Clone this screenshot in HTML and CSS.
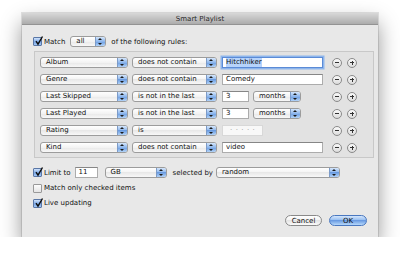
FILE: index.html
```html
<!DOCTYPE html>
<html lang="en">
  <head>
    <meta charset="UTF-8" />
    <meta name="viewport" content="width=device-width, initial-scale=1.0" />
    <title>Smart Playlist</title>
    <link rel="stylesheet" href="styles.css">
  </head>
  <body>
    <div class="sp-Window">
      <div class="sp-Titlebar">Smart Playlist</div>
      <div class="sp-Content">
        <div class="sp-Line">
          <span class="sp-Check sp-Check-on"><svg viewBox="0 0 9 9"><path d="M2 4.2 L4 7.2 L8.5 -0.5"/></svg></span>
          <span class="sp-Label">Match</span>
          <span class="sp-Popup sp-Popup-all"><span class="sp-Popup_Text">all</span><span class="sp-Popup_Arrow"></span></span>
          <span class="sp-Label sp-Label-after">of the following rules:</span>
        </div>

        <div class="sp-Rules">
          <div class="sp-Rule">
            <span class="sp-Popup sp-Popup-field"><span class="sp-Popup_Text">Album</span><span class="sp-Popup_Arrow"></span></span>
            <span class="sp-Popup sp-Popup-op"><span class="sp-Popup_Text">does not contain</span><span class="sp-Popup_Arrow"></span></span>
            <span class="sp-Value">
              <span class="sp-Input sp-Input-wide sp-Input-focus"><span class="sp-Input_Sel">Hitchhiker</span></span>
            </span>
            <span class="sp-Round sp-Round-minus"></span>
            <span class="sp-Round sp-Round-plus"></span>
          </div>
          <div class="sp-Rule">
            <span class="sp-Popup sp-Popup-field"><span class="sp-Popup_Text">Genre</span><span class="sp-Popup_Arrow"></span></span>
            <span class="sp-Popup sp-Popup-op"><span class="sp-Popup_Text">does not contain</span><span class="sp-Popup_Arrow"></span></span>
            <span class="sp-Value">
              <span class="sp-Input sp-Input-wide">Comedy</span>
            </span>
            <span class="sp-Round sp-Round-minus"></span>
            <span class="sp-Round sp-Round-plus"></span>
          </div>
          <div class="sp-Rule">
            <span class="sp-Popup sp-Popup-field"><span class="sp-Popup_Text">Last Skipped</span><span class="sp-Popup_Arrow"></span></span>
            <span class="sp-Popup sp-Popup-op"><span class="sp-Popup_Text">is not in the last</span><span class="sp-Popup_Arrow"></span></span>
            <span class="sp-Value">
              <span class="sp-Input sp-Input-num">3</span>
              <span class="sp-Popup sp-Popup-unit"><span class="sp-Popup_Text">months</span><span class="sp-Popup_Arrow"></span></span>
            </span>
            <span class="sp-Round sp-Round-minus"></span>
            <span class="sp-Round sp-Round-plus"></span>
          </div>
          <div class="sp-Rule">
            <span class="sp-Popup sp-Popup-field"><span class="sp-Popup_Text">Last Played</span><span class="sp-Popup_Arrow"></span></span>
            <span class="sp-Popup sp-Popup-op"><span class="sp-Popup_Text">is not in the last</span><span class="sp-Popup_Arrow"></span></span>
            <span class="sp-Value">
              <span class="sp-Input sp-Input-num">3</span>
              <span class="sp-Popup sp-Popup-unit"><span class="sp-Popup_Text">months</span><span class="sp-Popup_Arrow"></span></span>
            </span>
            <span class="sp-Round sp-Round-minus"></span>
            <span class="sp-Round sp-Round-plus"></span>
          </div>
          <div class="sp-Rule">
            <span class="sp-Popup sp-Popup-field"><span class="sp-Popup_Text">Rating</span><span class="sp-Popup_Arrow"></span></span>
            <span class="sp-Popup sp-Popup-op"><span class="sp-Popup_Text">is</span><span class="sp-Popup_Arrow"></span></span>
            <span class="sp-Value">
              <span class="sp-Input sp-Input-stars">· · · · ·</span>
            </span>
            <span class="sp-Round sp-Round-minus"></span>
            <span class="sp-Round sp-Round-plus"></span>
          </div>
          <div class="sp-Rule">
            <span class="sp-Popup sp-Popup-field"><span class="sp-Popup_Text">Kind</span><span class="sp-Popup_Arrow"></span></span>
            <span class="sp-Popup sp-Popup-op"><span class="sp-Popup_Text">does not contain</span><span class="sp-Popup_Arrow"></span></span>
            <span class="sp-Value">
              <span class="sp-Input sp-Input-wide">video</span>
            </span>
            <span class="sp-Round sp-Round-minus"></span>
            <span class="sp-Round sp-Round-plus"></span>
          </div>
        </div>

        <div class="sp-Line sp-Line-limit">
          <span class="sp-Check sp-Check-on"><svg viewBox="0 0 9 9"><path d="M2 4.2 L4 7.2 L8.5 -0.5"/></svg></span>
          <span class="sp-Label">Limit to</span>
          <span class="sp-Input sp-Input-limit">11</span>
          <span class="sp-Popup sp-Popup-gb"><span class="sp-Popup_Text">GB</span><span class="sp-Popup_Arrow"></span></span>
          <span class="sp-Label sp-Label-sel">selected by</span>
          <span class="sp-Popup sp-Popup-random"><span class="sp-Popup_Text">random</span><span class="sp-Popup_Arrow"></span></span>
        </div>

        <div class="sp-Line sp-Line-opt">
          <span class="sp-Check"></span>
          <span class="sp-Label">Match only checked items</span>
        </div>
        <div class="sp-Line sp-Line-opt">
          <span class="sp-Check sp-Check-on"><svg viewBox="0 0 9 9"><path d="M2 4.2 L4 7.2 L8.5 -0.5"/></svg></span>
          <span class="sp-Label">Live updating</span>
        </div>

        <div class="sp-Buttons">
          <span class="sp-Btn">Cancel</span>
          <span class="sp-Btn sp-Btn-default">OK</span>
        </div>
      </div>
    </div>
  </body>
</html>
```

FILE: styles.css
```css
* {
  box-sizing: border-box;
}

html,
body {
  margin: 0;
  padding: 0;
}

body {
  background-color: #fff;
  font-family: 'DejaVu Sans', 'Liberation Sans', sans-serif;
  font-size: 7px;
  color: #111;
}

/* Dialog frame */

.sp-Window {
  width: 356px;
  height: 224px;
  margin: 13px 0 0 22px;
  background-color: #e8e8e8;
  box-shadow: 0 10px 20px rgba(0, 0, 0, 0.42), 0 0 0 1px rgba(0, 0, 0, 0.1);
}

.sp-Titlebar {
  height: 12px;
  line-height: 12px;
  text-align: center;
  color: #2a2a2a;
  background: linear-gradient(#d8d8d8, #acacac);
  border-bottom: 1px solid #939393;
}

.sp-Content {
  padding: 11px 4px 0 12px;
}

/* Plain rows of controls */

.sp-Line {
  display: flex;
  align-items: center;
  height: 11px;
}

.sp-Line-limit {
  margin-top: 9px;
}

.sp-Line-opt {
  height: 10px;
  margin-top: 5px;
}

.sp-Label {
  margin-left: 2px;
  white-space: nowrap;
}

.sp-Label-after {
  margin-left: 5px;
}

.sp-Label-sel {
  margin-left: 6px;
}

/* Check boxes */

.sp-Check {
  position: relative;
  width: 9px;
  height: 9px;
  flex: none;
  margin-left: -1px;
  border: 1px solid #999;
  border-radius: 1px;
  background: linear-gradient(#fdfdfd, #e4e4e4);
}

.sp-Check-on {
  border-color: #5a77a6;
  background: linear-gradient(#cfe2fb, #7aa7e6 55%, #a2c7f6);
}

.sp-Check svg {
  position: absolute;
  left: 0;
  top: -1px;
  width: 9px;
  height: 9px;
  overflow: visible;
}

.sp-Check path {
  fill: none;
  stroke: #0c0c0c;
  stroke-width: 1.4;
}

/* Pop-up menus */

.sp-Popup {
  position: relative;
  display: flex;
  align-items: center;
  flex: none;
  height: 11px;
  border: 1px solid #9c9c9c;
  border-radius: 3px;
  background: linear-gradient(#ffffff, #f3f3f3 50%, #e8e8e8 50%, #f8f8f8);
  overflow: hidden;
}

.sp-Popup_Text {
  flex: 1;
  padding-left: 5px;
  line-height: 9px;
  white-space: nowrap;
}

.sp-Popup_Arrow {
  position: relative;
  width: 10px;
  height: 100%;
  flex: none;
  border-left: 1px solid #7c9bc8;
  background: linear-gradient(#d4e6fc, #8db6ec 50%, #6a9be0 50%, #b2d3f8);
}

.sp-Popup_Arrow:before,
.sp-Popup_Arrow:after {
  content: '';
  position: absolute;
  left: 2px;
  border-left: 2px solid transparent;
  border-right: 2px solid transparent;
}

.sp-Popup_Arrow:before {
  top: 1px;
  border-bottom: 2px solid #1a1a1a;
}

.sp-Popup_Arrow:after {
  bottom: 1px;
  border-top: 2px solid #1a1a1a;
}

.sp-Popup-all {
  width: 36px;
  margin-left: 5px;
}

.sp-Popup-field {
  width: 88px;
}

.sp-Popup-op {
  width: 85px;
  margin-left: 4px;
}

.sp-Popup-unit {
  width: 48px;
  margin-left: 4px;
}

.sp-Popup-gb {
  width: 62px;
  margin-left: 7px;
}

.sp-Popup-random {
  width: 124px;
  margin-left: 3px;
}

/* Text fields */

.sp-Input {
  display: flex;
  align-items: center;
  flex: none;
  height: 11px;
  padding-left: 3px;
  background-color: #fff;
  border: 1px solid #acacac;
  border-top-color: #868686;
  line-height: 9px;
  white-space: nowrap;
}

.sp-Input-wide {
  width: 101px;
}

.sp-Input-num {
  width: 27px;
}

.sp-Input-focus {
  border-color: #5b8bd6;
  box-shadow: 0 0 0 1.5px #8db5ec;
}

.sp-Input_Sel {
  background-color: #b6d3fb;
}

.sp-Input-stars {
  width: 41px;
  padding-left: 7px;
  color: #9c9c9c;
  background-color: #f8f8f8;
  border-color: #d8d8d8;
  letter-spacing: 0.6px;
}

.sp-Input-limit {
  width: 23px;
  margin-left: 4px;
}

/* Rule list */

.sp-Rules {
  display: flex;
  flex-direction: column;
  gap: 6px;
  height: 107px;
  margin-top: 4px;
  padding: 5px 5px 0;
  background-color: #e2e2e2;
  border: 1px solid #c8c8c8;
}

.sp-Rule {
  display: flex;
  align-items: center;
  height: 11px;
}

.sp-Value {
  display: flex;
  align-items: center;
  width: 101px;
  margin-left: 5px;
}

.sp-Round {
  position: relative;
  width: 10px;
  height: 10px;
  flex: none;
  border: 1px solid #8a8a8a;
  border-radius: 50%;
  background: linear-gradient(#fafafa, #dcdcdc);
}

.sp-Round-minus {
  margin-left: 9px;
}

.sp-Round-plus {
  margin-left: 5px;
}

.sp-Round:before,
.sp-Round:after {
  content: '';
  position: absolute;
  background-color: #333;
}

.sp-Round:before {
  left: 2px;
  top: 3.5px;
  width: 4px;
  height: 1px;
}

.sp-Round-plus:after {
  left: 3.5px;
  top: 2px;
  width: 1px;
  height: 4px;
}

/* Dialog buttons */

.sp-Buttons {
  display: flex;
  justify-content: flex-end;
  gap: 7px;
  margin-top: 7px;
  padding-right: 7px;
}

.sp-Btn {
  display: flex;
  align-items: center;
  justify-content: center;
  width: 37px;
  height: 11px;
  border: 1px solid #8a8a8a;
  border-radius: 6px;
  background: linear-gradient(#ffffff, #f2f2f2 50%, #e4e4e4 50%, #fafafa);
}

.sp-Btn-default {
  width: 38px;
  border-color: #4a78c0;
  background: linear-gradient(#d4e6fc, #90baf0 50%, #6a9be2 50%, #b6d8fb);
}
```
